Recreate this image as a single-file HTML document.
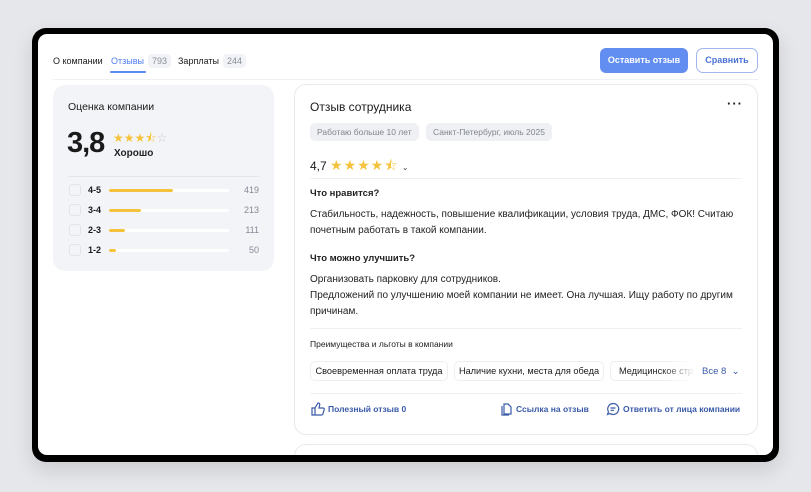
<!DOCTYPE html><html><head><meta charset="utf-8"><style>
*{box-sizing:border-box;margin:0;padding:0}
body{width:811px;height:492px;background:#e6e7eb;font-family:"Liberation Sans",sans-serif;position:relative;overflow:hidden;color:#1a1a1a}
.frame{position:absolute;left:32px;top:28px;width:747px;height:434px;background:#000;border-radius:14px;box-shadow:0 8px 20px rgba(0,0,0,.12)}
.scr{position:absolute;left:38px;top:34px;width:735px;height:421px;background:#fff;border-radius:9px;overflow:hidden}
.abs{position:absolute}
.t{font-size:9px;white-space:nowrap}
.m{font-weight:bold;color:#222}
.badge{background:#f2f3f7;color:#8a8f9a;border-radius:4px;padding:2px 4px;font-size:9px}
.card{position:absolute;border:1px solid #e8e9ee;border-radius:12px;background:#fff}
.chip{position:absolute;border:1px solid #eceef2;border-radius:5px;font-size:9.2px;height:20px;line-height:18px;text-align:center;white-space:nowrap;overflow:hidden}
.blue{color:#3a5aa8}
.star{color:#f5c33b}
</style></head><body>
<div class="frame"></div>
<div class="scr">
<div class="abs t" style="left:15px;top:22px">О компании</div>
<div class="abs t" style="left:73px;top:22px;color:#4d7cf0">Отзывы</div>
<div class="abs" style="left:72px;top:37px;width:36px;height:2px;background:#5b8af0;border-radius:1px"></div>
<div class="abs badge" style="left:110px;top:20px">793</div>
<div class="abs t" style="left:140px;top:22px">Зарплаты</div>
<div class="abs badge" style="left:185px;top:20px">244</div>
<div class="abs" style="left:15px;top:45px;width:705px;height:1px;background:#eef0f3"></div>
<div class="abs" style="left:562px;top:14px;width:88px;height:25px;background:#628ef2;border-radius:6px;color:#fff;font-size:9px;font-weight:bold;text-align:center;line-height:25px">Оставить отзыв</div>
<div class="abs" style="left:658px;top:14px;width:62px;height:25px;border:1px solid #9fb6ee;border-radius:7px;color:#4a72d6;font-size:9px;font-weight:bold;text-align:center;line-height:23px">Сравнить</div>

<div class="abs" style="left:15px;top:51px;width:221px;height:186px;background:#f3f4f8;border-radius:12px"></div>
<div class="abs" style="left:30px;top:67px;font-size:10.5px">Оценка компании</div>
<div class="abs" style="left:29px;top:93px;font-size:29px;font-weight:bold;letter-spacing:-1px">3,8</div>
<div class="abs" style="left:75px;top:95px;font-size:12px;letter-spacing:0"><span class="star">★★★⯪</span><span style="color:#ccc">☆</span></div>
<div class="abs m" style="left:76px;top:114px;font-size:10px">Хорошо</div>
<div class="abs" style="left:30px;top:142px;width:191px;height:1px;background:#e3e5ea"></div>
<div id="rows"></div>
<div class="card" style="left:256px;top:50px;width:464px;height:351px"></div>
<div class="card" style="left:256px;top:410px;width:464px;height:40px"></div>
<div class="abs" style="left:272px;top:66px;font-size:12px">Отзыв сотрудника</div>
<div class="abs" style="left:689px;top:62px;font-size:13px;font-weight:bold;letter-spacing:1px">···</div>
<div class="abs" style="left:272px;top:89px;background:#eff0f4;border-radius:5px;padding:4px 7px;font-size:8.5px;color:#80858f">Работаю больше 10 лет</div>
<div class="abs" style="left:388px;top:89px;background:#eff0f4;border-radius:5px;padding:4px 7px;font-size:8.5px;color:#80858f">Санкт-Петербург, июль 2025</div>
<div class="abs" style="left:272px;top:121px;font-size:12px">4,7 <span class="star" style="font-size:14px;letter-spacing:1px">★★★★⯪</span> <span style="font-size:8px;color:#444">⌄</span></div>
<div class="abs" style="left:272px;top:144px;width:432px;height:1px;background:#eef0f3"></div>
<div class="abs m" style="left:272px;top:154px;font-size:9.5px">Что нравится?</div>
<div class="abs" style="left:272px;top:173px;width:440px;font-size:10px;line-height:16px;color:#222">Стабильность, надежность, повышение квалификации, условия труда, ДМС, ФОК! Считаю почетным работать в такой компании.</div>
<div class="abs m" style="left:272px;top:219px;font-size:9.5px">Что можно улучшить?</div>
<div class="abs" style="left:272px;top:238px;width:440px;font-size:10px;line-height:16px;color:#222">Организовать парковку для сотрудников.<br>Предложений по улучшению моей компании не имеет. Она лучшая. Ищу работу по другим причинам.</div>
<div class="abs" style="left:272px;top:294px;width:432px;height:1px;background:#eef0f3"></div>
<div class="abs" style="left:272px;top:305px;font-size:8.5px;color:#222">Преимущества и льготы в компании</div>
<div class="chip" style="left:272px;top:327px;width:138px">Своевременная оплата труда</div>
<div class="chip" style="left:416px;top:327px;width:150px">Наличие кухни, места для обеда</div>
<div class="chip" style="left:572px;top:327px;width:84px;text-align:left;padding-left:8px;color:#222">Медицинское страхование</div>
<div class="abs" style="left:624px;top:327px;width:34px;height:20px;background:linear-gradient(90deg,rgba(255,255,255,0),#fff)"></div>
<div class="abs blue" style="left:664px;top:332px;font-size:9.5px">Все 8 &nbsp;⌄</div>
<div class="abs" style="left:272px;top:359px;width:432px;height:1px;background:#eef0f3"></div>
<svg class="abs" style="left:273px;top:368px" width="14" height="14" viewBox="0 0 14 14" fill="none" stroke="#3a5aa8" stroke-width="1.2"><path d="M1 6h3v7H1zM4 6l3-5c1.5 0 2 1 1.6 2.5L8 6h4c1 0 1.5.8 1.2 1.7l-1.4 4.4c-.3.6-.8.9-1.4.9H4"/></svg>
<div class="abs blue t" style="left:290px;top:370px;font-weight:bold;font-size:8.5px">Полезный отзыв 0</div>
<svg class="abs" style="left:462px;top:368px" width="13" height="14" viewBox="0 0 13 14" fill="none" stroke="#3a5aa8" stroke-width="1.2"><path d="M4 2h4l3 3v7H4z M2 4v9h7"/></svg>
<div class="abs blue t" style="left:478px;top:370px;font-weight:bold;font-size:8.5px">Ссылка на отзыв</div>
<svg class="abs" style="left:568px;top:368px" width="14" height="14" viewBox="0 0 14 14" fill="none" stroke="#3a5aa8" stroke-width="1.2"><path d="M7 1.5a5.5 5.5 0 1 1-3 10L1.5 12.5l1-2.7A5.5 5.5 0 0 1 7 1.5zM4.5 6h5M4.5 8.3h3.5"/></svg>
<div class="abs blue t" style="left:585px;top:370px;font-weight:bold;font-size:8.5px">Ответить от лица компании</div>
</div>
<script>
var d=[["4-5",64,"419"],["3-4",32,"213"],["2-3",16,"111"],["1-2",7,"50"]],h="";
d.forEach(function(r,i){var y=150+i*20;
h+='<div class="abs" style="left:31px;top:'+y+'px;width:12px;height:12px;border:1px solid #e2e4ea;border-radius:3px;background:#f3f4f8"></div>'+
'<div class="abs" style="left:50px;top:'+(y+1)+'px;font-size:9px;font-weight:bold">'+r[0]+'</div>'+
'<div class="abs" style="left:71px;top:'+(y+5)+'px;width:120px;height:3px;background:#fff;border-radius:2px"><div style="width:'+r[1]+'px;height:3px;background:#f5c33b;border-radius:2px"></div></div>'+
'<div class="abs" style="left:190px;width:31px;text-align:right;top:'+(y+1)+'px;font-size:9px;color:#858a95">'+r[2]+'</div>';});
document.getElementById("rows").outerHTML=h;
</script>
</body></html>
